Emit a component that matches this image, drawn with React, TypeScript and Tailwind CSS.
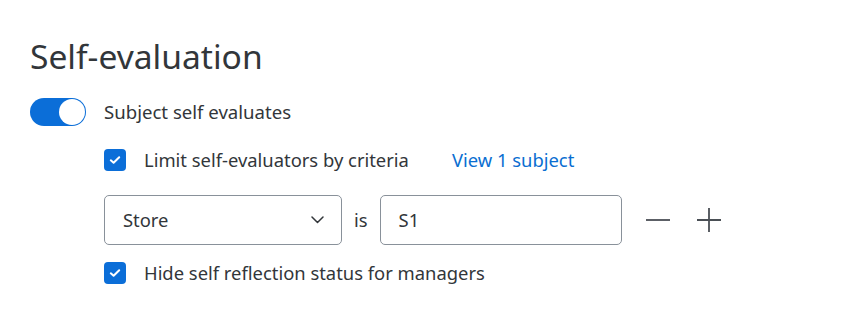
import { useState } from 'react'

function CheckBox({ checked, onChange }: { checked: boolean; onChange: () => void }) {
  return (
    <button
      type="button"
      onClick={onChange}
      className={`flex h-[22px] w-[22px] shrink-0 items-center justify-center rounded-[4px] ${
        checked ? 'bg-[#0b6ed8]' : 'border border-[#89919a] bg-white'
      }`}
    >
      {checked && (
        <svg width="12" height="10" viewBox="0 0 12 10" fill="none">
          <path d="M1.8 5.3L4.6 7.8L10.2 2.2" stroke="white" strokeWidth="2" strokeLinecap="round" strokeLinejoin="round" />
        </svg>
      )}
    </button>
  )
}

export default function App() {
  const [selfEval, setSelfEval] = useState(true)
  const [limit, setLimit] = useState(true)
  const [hide, setHide] = useState(true)

  return (
    <div className="h-[315px] w-[850px] bg-white pl-[30px] pt-[36px] font-['Noto_Sans',sans-serif] text-[#32363a]">
      <h1 className="text-[33.6px] leading-[40px]">Self-evaluation</h1>

      <div className="mt-[22px] flex h-[28px] items-center gap-[18px]">
        {/* toggle */}
        <button
          type="button"
          onClick={() => setSelfEval(!selfEval)}
          className={`flex h-[28px] w-[56px] items-center rounded-full p-[1px] ${
            selfEval ? 'justify-end bg-[#0b6ed8]' : 'justify-start bg-[#89919a]'
          }`}
        >
          <span className="h-[26px] w-[26px] rounded-full bg-white" />
        </button>
        <span className="text-[18.6px]">Subject self evaluates</span>
      </div>

      <div className="ml-[74px] mt-[23px]">
        <div className="flex h-[22px] items-center">
          <CheckBox checked={limit} onChange={() => setLimit(!limit)} />
          <span className="ml-[18px] text-[18.4px]">Limit self-evaluators by criteria</span>
          <a className="ml-[43px] cursor-pointer text-[18.4px] text-[#0a6ed1]">View 1 subject</a>
        </div>

        {/* criteria row */}
        <div className="mt-[24px] flex items-center">
          <div className="flex h-[50px] w-[238px] items-center justify-between rounded-[5px] border border-[#89919a] pl-[18px] pr-[17px]">
            <span className="text-[18.4px]">Store</span>
            <svg width="13" height="8" viewBox="0 0 13 8" fill="none">
              <path d="M1 1L6.5 6.5L12 1" stroke="#32363a" strokeWidth="1.5" strokeLinecap="round" strokeLinejoin="round" />
            </svg>
          </div>
          <span className="mx-[12px] text-[18.4px]">is</span>
          <div className="flex h-[50px] w-[242px] items-center rounded-[5px] border border-[#89919a] pl-[18px]">
            <span className="text-[18.4px]">S1</span>
          </div>
          <svg className="ml-[24px]" width="24" height="24" viewBox="0 0 24 24" fill="none">
            <path d="M0 12H24" stroke="#4a4f55" strokeWidth="1.8" />
          </svg>
          <svg className="ml-[27px]" width="24" height="24" viewBox="0 0 24 24" fill="none">
            <path d="M0 12H24M12 0V24" stroke="#4a4f55" strokeWidth="1.8" />
          </svg>
        </div>

        <div className="mt-[17px] flex h-[22px] items-center">
          <CheckBox checked={hide} onChange={() => setHide(!hide)} />
          <span className="ml-[18px] text-[18.4px]">Hide self reflection status for managers</span>
        </div>
      </div>
    </div>
  )
}
